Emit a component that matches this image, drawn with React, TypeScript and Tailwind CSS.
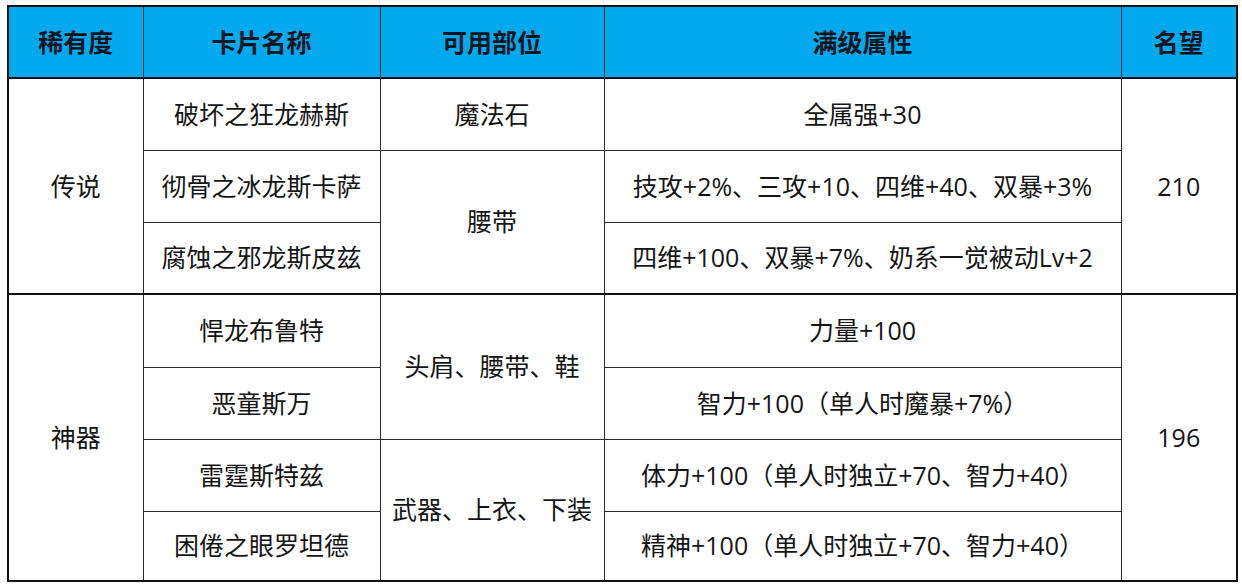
import React from "react";

const cell = "border border-[#2a2a2a] text-center align-middle";

export default function App() {
  return (
    <div className="w-[1242px] h-[587px] bg-white pt-[5px] pl-[7px]" style={{ fontFamily: '"Open Sans", "Noto Sans CJK SC", "Noto Sans", sans-serif' }}>
      <table className="table-fixed border-collapse border-2 border-[#111] w-[1229px] text-[25px] text-[#151515] leading-none">
        <colgroup>
          <col className="w-[135px]" />
          <col className="w-[237px]" />
          <col className="w-[224px]" />
          <col className="w-[517px]" />
          <col className="w-[116px]" />
        </colgroup>
        <thead>
          <tr className="h-[72px] bg-[#03a9ef] font-bold text-[#0d1620]">
            <th className={`${cell} border-b-2 border-b-[#111]`}>稀有度</th>
            <th className={`${cell} border-b-2 border-b-[#111]`}>卡片名称</th>
            <th className={`${cell} border-b-2 border-b-[#111]`}>可用部位</th>
            <th className={`${cell} border-b-2 border-b-[#111]`}>满级属性</th>
            <th className={`${cell} border-b-2 border-b-[#111]`}>名望</th>
          </tr>
        </thead>
        <tbody>
          <tr className="h-[72px]">
            <td className={`${cell} border-b-2 border-b-[#111]`} rowSpan={3}>传说</td>
            <td className={cell}>破坏之狂龙赫斯</td>
            <td className={cell}>魔法石</td>
            <td className={cell}>全属强+30</td>
            <td className={`${cell} border-b-2 border-b-[#111]`} rowSpan={3}>210</td>
          </tr>
          <tr className="h-[72px]">
            <td className={cell}>彻骨之冰龙斯卡萨</td>
            <td className={`${cell} border-b-2 border-b-[#111]`} rowSpan={2}>腰带</td>
            <td className={cell}>技攻+2%、三攻+10、四维+40、双暴+3%</td>
          </tr>
          <tr className="h-[72px]">
            <td className={`${cell} border-b-2 border-b-[#111]`}>腐蚀之邪龙斯皮兹</td>
            <td className={`${cell} border-b-2 border-b-[#111]`}>四维+100、双暴+7%、奶系一觉被动Lv+2</td>
          </tr>
          <tr className="h-[73px]">
            <td className={cell} rowSpan={4}>神器</td>
            <td className={cell}>悍龙布鲁特</td>
            <td className={cell} rowSpan={2}>头肩、腰带、鞋</td>
            <td className={cell}>力量+100</td>
            <td className={cell} rowSpan={4}>196</td>
          </tr>
          <tr className="h-[72px]">
            <td className={cell}>恶童斯万</td>
            <td className={cell}>智力+100（单人时魔暴+7%）</td>
          </tr>
          <tr className="h-[72px]">
            <td className={cell}>雷霆斯特兹</td>
            <td className={cell} rowSpan={2}>武器、上衣、下装</td>
            <td className={cell}>体力+100（单人时独立+70、智力+40）</td>
          </tr>
          <tr className="h-[70px]">
            <td className={cell}>困倦之眼罗坦德</td>
            <td className={cell}>精神+100（单人时独立+70、智力+40）</td>
          </tr>
        </tbody>
      </table>
    </div>
  );
}
